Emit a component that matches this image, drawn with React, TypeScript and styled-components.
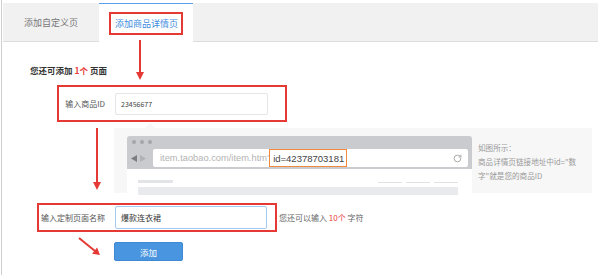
import React from "react";
import styled, { createGlobalStyle } from "styled-components";
import { RotateCw } from "lucide-react";

const GlobalStyle = createGlobalStyle`
  html, body {
    margin: 0;
    padding: 0;
    background: #fff;
  }
  body {
    font-family: "Noto Sans CJK SC", "Noto Sans", sans-serif;
    color: #555;
  }
`;

const Root = styled.div`
  position: relative;
  width: 600px;
  height: 275px;
  overflow: hidden;
`;

const Frame = styled.div`
  margin-left: 1px;
  border-left: 1px solid #cfcfcf;
  padding: 3px 2px 0 1px;
  height: 100%;
  box-sizing: border-box;
`;

const TabBar = styled.div`
  display: flex;
  align-items: flex-start;
  height: 39px;
  background: #f1f1f1;
  border-bottom: 1px solid #dcdcdc;
  box-sizing: border-box;
`;

const Tab = styled.div<{ $active?: boolean }>`
  width: ${(p) => (p.$active ? 94 : 96)}px;
  height: ${(p) => (p.$active ? 39 : 38)}px;
  display: flex;
  align-items: center;
  justify-content: center;
  box-sizing: border-box;
  font-size: 9px;
  color: ${(p) => (p.$active ? "#3d8de0" : "#777")};
  background: ${(p) => (p.$active ? "#fff" : "transparent")};
  border-top: ${(p) => (p.$active ? "1.5px solid #5aa0e8" : "none")};
`;

const TabMark = styled.span`
  border: 2px solid #e53935;
  padding: 3px 3px 3px 4px;
  line-height: 13px;
`;

const Content = styled.div`
  display: flex;
  flex-direction: column;
  align-items: flex-start;
`;

const Notice = styled.div`
  margin: 22px 0 0 27px;
  font-size: 8.5px;
  font-weight: bold;
  color: #333;
  line-height: 12px;
`;

const Red = styled.span`
  color: #e8403a;
`;

const FieldRow = styled.div<{ $left: number; $top: number }>`
  display: flex;
  align-items: center;
  margin: ${(p) => p.$top}px 0 0 ${(p) => p.$left}px;
`;

const MarkedBox = styled.div<{ $pad: number; $height: number }>`
  display: flex;
  align-items: center;
  border: 2px solid #e53935;
  height: ${(p) => p.$height}px;
  padding-right: ${(p) => p.$pad}px;
`;

const Label = styled.label<{ $width: number }>`
  width: ${(p) => p.$width}px;
  text-align: right;
  font-size: 8px;
  color: #555;
  margin-right: 10px;
  white-space: nowrap;
`;

const Input = styled.div<{ $focus?: boolean; $width: number; $height: number }>`
  width: ${(p) => p.$width}px;
  height: ${(p) => p.$height}px;
  box-sizing: border-box;
  border: 1px solid ${(p) => (p.$focus ? "#a3cbf2" : "#e6e6e6")};
  border-radius: 2px;
  background: #fff;
  display: flex;
  align-items: center;
  padding-left: 5px;
  font-size: ${(p) => (p.$focus ? 8 : 7)}px;
  color: ${(p) => (p.$focus ? "#333" : "#444")};
`;

const Tip = styled.span`
  margin-left: 2px;
  font-size: 8px;
  color: #666;
  white-space: nowrap;
`;

const Hint = styled.div`
  position: relative;
  display: flex;
  margin: 6px 0 0 111px;
  width: 478px;
  height: 65px;
  box-sizing: border-box;
  padding: 8px 0 0 13px;
  background: #f7f7f7;

  &::before {
    content: "";
    position: absolute;
    top: -5px;
    left: 31px;
    border-left: 5px solid transparent;
    border-right: 5px solid transparent;
    border-bottom: 5px solid #f7f7f7;
  }
`;

const Browser = styled.div`
  width: 345px;
  display: flex;
  flex-direction: column;
`;

const Chrome = styled.div`
  background: #c9cbcf;
  border-radius: 3px 3px 0 0;
  padding: 4px 4px 2px 4px;
`;

const Dots = styled.div`
  display: flex;
  gap: 4px;
  height: 4px;
  padding-left: 1px;
`;

const Dot = styled.span`
  width: 4px;
  height: 4px;
  border-radius: 50%;
  background: #a4a6aa;
`;

const AddressRow = styled.div`
  display: flex;
  align-items: center;
  margin-top: 5px;
  height: 18px;
`;

const Nav = styled.div`
  width: 22px;
  display: flex;
  align-items: center;
`;

const AddressBar = styled.div`
  flex: 1;
  height: 18px;
  background: #fff;
  border-radius: 2px;
  display: flex;
  align-items: stretch;
  padding-left: 7px;
  font-family: "Liberation Sans", Arial, sans-serif;
`;

const Url = styled.span`
  display: flex;
  align-items: center;
  font-size: 9.3px;
  color: #b3b3b3;
`;

const IdBox = styled.span`
  display: flex;
  align-items: center;
  margin-left: -3px;
  padding: 0 2px 0 3px;
  border: 1.5px solid #ef8a3e;
  background: #fff;
  font-size: 9.5px;
  color: #444;
`;

const Refresh = styled.span`
  margin-left: auto;
  padding-right: 6px;
  display: flex;
  align-items: center;
  color: #a8a8a8;
`;

const PageBody = styled.div`
  flex: 1;
  background: #fff;
  padding: 10px 14px 0 11px;
`;

const BodyTop = styled.div`
  display: flex;
  justify-content: space-between;
  align-items: flex-end;
  height: 4px;
`;

const ShortBar = styled.span`
  width: 35px;
  height: 3px;
  background: #e2e4e7;
`;

const Lines = styled.div`
  display: flex;
  gap: 4px;
`;

const ThinLine = styled.span`
  width: 24px;
  height: 1px;
  background: #e2e2e2;
`;

const FullBar = styled.div`
  margin-top: 4px;
  height: 8px;
  background: #e8eaed;
`;

const HintText = styled.div`
  margin-left: 6px;
  padding-top: 5px;
  font-size: 7.6px;
  line-height: 14px;
  color: #9a9a9a;
  white-space: nowrap;
`;

const AddButton = styled.button`
  margin: 10px 0 0 111px;
  width: 69px;
  height: 19px;
  border: 1px solid #3f88d4;
  border-radius: 2px;
  background: #4a95e0;
  color: #fff;
  font-family: inherit;
  font-size: 8.5px;
  padding: 0;
`;

const Overlay = styled.svg`
  position: absolute;
  left: 0;
  top: 0;
  pointer-events: none;
`;

export default function App() {
  return (
    <Root>
      <GlobalStyle />
      <Frame>
        <TabBar>
          <Tab>添加自定义页</Tab>
          <Tab $active>
            <TabMark>添加商品详情页</TabMark>
          </Tab>
        </TabBar>
        <Content>
          <Notice>
            您还可添加 <Red>1个</Red> 页面
          </Notice>
          <FieldRow $left={54} $top={9}>
            <MarkedBox $pad={17} $height={33}>
              <Label $width={46}>输入商品ID</Label>
              <Input $width={153} $height={22}>
                23456677
              </Input>
            </MarkedBox>
          </FieldRow>
          <Hint>
            <Browser>
              <Chrome>
                <Dots>
                  <Dot />
                  <Dot />
                  <Dot />
                </Dots>
                <AddressRow>
                  <Nav>
                    <svg width="16" height="7" viewBox="0 0 16 7">
                      <polygon points="0,3.5 6,0 6,7" fill="#7b7d80" />
                      <polygon points="15,3.5 9,0 9,7" fill="#b0b2b5" />
                    </svg>
                  </Nav>
                  <AddressBar>
                    <Url>item.taobao.com/item.htm?</Url>
                    <IdBox>id=42378703181</IdBox>
                    <Refresh>
                      <RotateCw size={9} strokeWidth={2.6} />
                    </Refresh>
                  </AddressBar>
                </AddressRow>
              </Chrome>
              <PageBody>
                <BodyTop>
                  <ShortBar />
                  <Lines>
                    <ThinLine />
                    <ThinLine />
                    <ThinLine />
                  </Lines>
                </BodyTop>
                <FullBar />
              </PageBody>
            </Browser>
            <HintText>
              如图所示：
              <br />
              商品详情页链接地址中id="数
              <br />
              字"就是您的商品ID
            </HintText>
          </Hint>
          <FieldRow $left={34} $top={10}>
            <MarkedBox $pad={8} $height={25}>
              <Label $width={66}>输入定制页面名称</Label>
              <Input $focus $width={152} $height={23}>
                爆款连衣裙
              </Input>
            </MarkedBox>
            <Tip>
              您还可以输入 <Red>10个</Red> 字符
            </Tip>
          </FieldRow>
          <AddButton>添加</AddButton>
        </Content>
      </Frame>
      <Overlay width="600" height="275" viewBox="0 0 600 275">
        <g stroke="#e53935" strokeWidth="2" fill="#e53935">
          <line x1="140" y1="40" x2="140" y2="73" />
          <polygon points="136,72 144,72 140,80" stroke="none" />
          <line x1="97" y1="128" x2="97" y2="183" />
          <polygon points="93,182 101,182 97,190" stroke="none" />
          <line x1="79" y1="238" x2="95" y2="251" />
          <polygon points="92.1,253.7 97.1,247.5 100,255" stroke="none" />
        </g>
      </Overlay>
    </Root>
  );
}
